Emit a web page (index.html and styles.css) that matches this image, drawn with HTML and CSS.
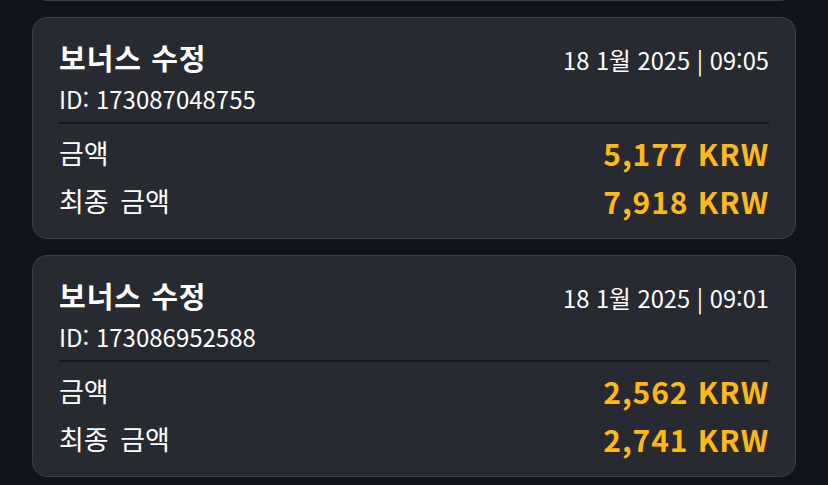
FILE: index.html
```html
<!DOCTYPE html>
<html lang="ko">
<head>
  <meta charset="UTF-8">
  <title>보너스 내역</title>
  <link rel="stylesheet" href="styles.css">
</head>
<body>

<div class="list">
  <div class="card">
    <div class="card-head">
      <div class="title">보너스 수정</div>
      <div class="date">18 1월 2025 | 09:12</div>
    </div>
    <div class="id">ID: 173087091234</div>
    <div class="divider"></div>
    <div class="row"><span>금액</span><span class="amount">1,204 KRW</span></div>
    <div class="row"><span>최종 금액</span><span class="amount">5,177 KRW</span></div>
  </div>

  <div class="card">
    <div class="card-head">
      <div class="title">보너스 수정</div>
      <div class="date">18 1월 2025 | 09:05</div>
    </div>
    <div class="id">ID: 173087048755</div>
    <div class="divider"></div>
    <div class="row"><span>금액</span><span class="amount">5,177 KRW</span></div>
    <div class="row"><span>최종 금액</span><span class="amount">7,918 KRW</span></div>
  </div>

  <div class="card">
    <div class="card-head">
      <div class="title">보너스 수정</div>
      <div class="date">18 1월 2025 | 09:01</div>
    </div>
    <div class="id">ID: 173086952588</div>
    <div class="divider"></div>
    <div class="row"><span>금액</span><span class="amount">2,562 KRW</span></div>
    <div class="row"><span>최종 금액</span><span class="amount">2,741 KRW</span></div>
  </div>
</div>

</body>
</html>
```

FILE: styles.css
```css
body {
  margin: 0;
  background-color: #0f151b;
  font-family: "Noto Sans CJK KR", "Noto Sans", sans-serif;
  color: #fff;
}
.list {
  display: flex;
  flex-direction: column;
  gap: 16px;
  padding: 0 32px;
  margin-top: -221px;
}
.card {
  background: #272a31;
  border: 1px solid #3d4045;
  border-radius: 15px;
  padding: 18px 26px 0;
  height: 222px;
  box-sizing: border-box;
}
.card-head {
  display: flex;
  justify-content: space-between;
  align-items: center;
}
.title {
  font-size: 29px;
  font-weight: 700;
  line-height: 42px;
  letter-spacing: 1px;
}
.date {
  font-size: 23.7px;
  line-height: 36px;
  padding-top: 6px;
}
.id {
  font-size: 24px;
  line-height: 30px;
  margin-top: 6px;
}
.divider {
  height: 2px;
  background: #14181d;
  margin: 8px 0 5px;
}
.row {
  display: flex;
  justify-content: space-between;
  align-items: center;
  font-size: 27px;
  line-height: 48px;
  word-spacing: 4px;
}
.amount {
  color: #ffb916;
  font-weight: 700;
  font-size: 30px;
  letter-spacing: 0.9px;
  word-spacing: 0;
}
```
